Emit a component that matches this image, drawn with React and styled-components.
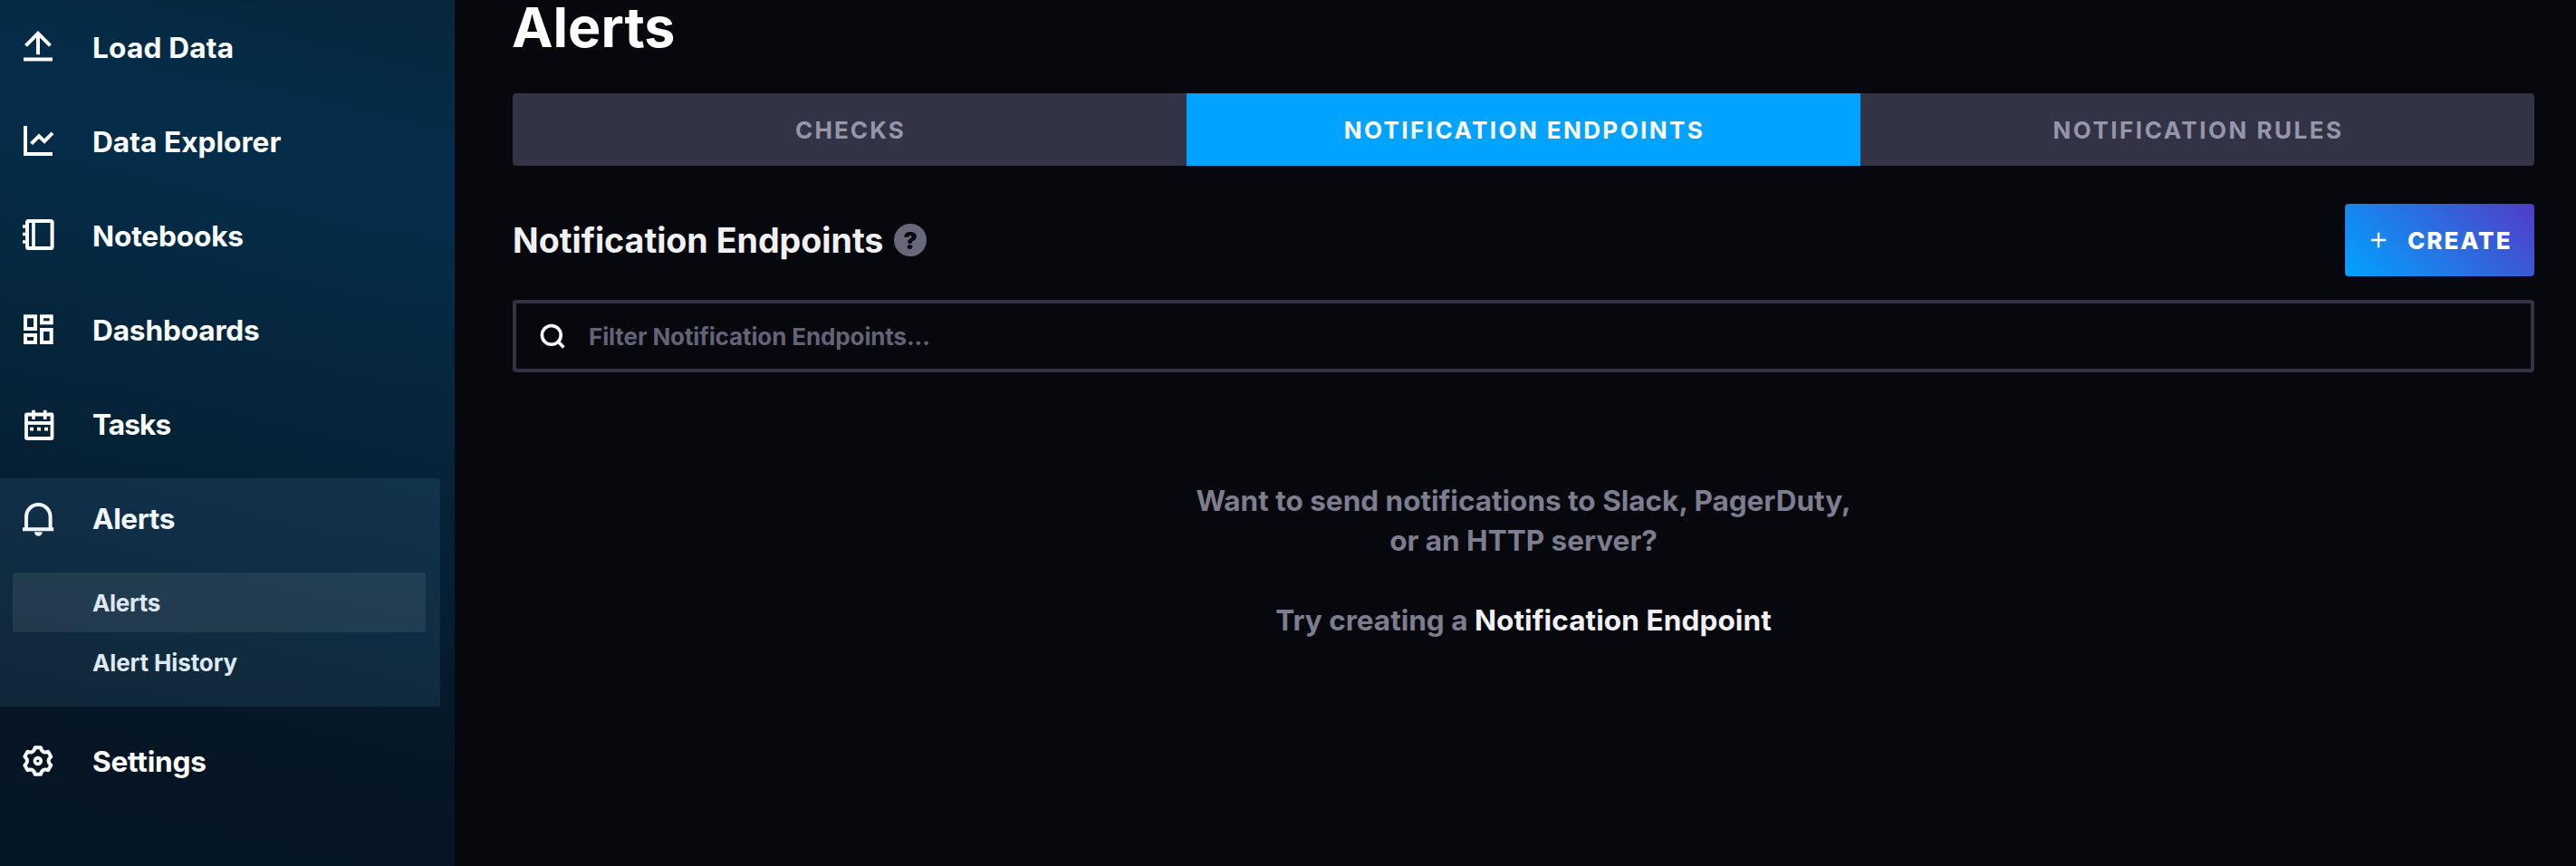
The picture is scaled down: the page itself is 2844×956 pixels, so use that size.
import React from 'react';
import styled, { createGlobalStyle } from 'styled-components';

const GlobalStyle = createGlobalStyle`
  * { box-sizing: border-box; }
  body {
    margin: 0;
    background: #07070e;
    font-family: Inter, "Liberation Sans", sans-serif;
    overflow: hidden;
  }
`;

const Shell = styled.div`
  display: flex;
  width: 100%;
  height: 956px;
  background: #07070e;
`;

/* ---------- sidebar ---------- */

const Sidebar = styled.nav`
  flex: none;
  display: flex;
  flex-direction: column;
  gap: 16px;
  width: 502px;
  padding: 8px 16px 0 0;
  background: linear-gradient(
    192.4deg,
    #07263a 0%,
    #052a45 10%,
    #042d4a 19%,
    #052a45 30%,
    #06253b 44%,
    #052034 58%,
    #051827 76%,
    #051524 86%,
    #041626 100%
  );
`;

const NavGroup = styled.div`
  border-radius: 0 4px 4px 0;
  background: ${(p) => (p.$active ? 'rgba(110, 180, 240, 0.11)' : 'transparent')};
`;

const NavItem = styled.a`
  display: flex;
  align-items: center;
  gap: 40px;
  height: 88px;
  padding-left: 22px;
  color: ${(p) => (p.$active ? '#f1f8ff' : '#ffffff')};
`;

const NavIcon = styled.svg`
  flex: none;
  width: 40px;
  height: 40px;
  fill: none;
  stroke: currentColor;
  stroke-width: 4;
`;

const NavLabel = styled.span`
  padding-top: 1px;
  font-size: 31.6px;
  font-weight: 700;
  white-space: nowrap;
  letter-spacing: ${(p) => p.$track}px;
`;

const SubMenu = styled.div`
  padding: 16px 16px 16px 14px;
`;

const SubItem = styled.a`
  display: flex;
  align-items: center;
  height: 66px;
  padding: 1px 0 0 88px;
  border-radius: 4px;
  background: ${(p) => (p.$active ? 'rgba(255, 255, 255, 0.08)' : 'transparent')};
  color: #dfe9f4;
  font-size: 26px;
  font-weight: 700;
  letter-spacing: ${(p) => p.$track}px;
`;

/* ---------- page ---------- */

const Page = styled.main`
  flex: 1;
  display: flex;
  flex-direction: column;
  padding: 0 46px 0 64px;
`;

const Title = styled.h1`
  margin: 0 0 43px -1px;
  height: 60px;
  line-height: 60px;
  font-size: 61px;
  font-weight: 700;
  letter-spacing: 0;
  color: #ffffff;
`;

const Tabs = styled.div`
  display: grid;
  grid-template-columns: repeat(3, 1fr);
  height: 80px;
  border-radius: 4px;
  overflow: hidden;
  background: #333346;
`;

const Tab = styled.div`
  display: flex;
  align-items: center;
  justify-content: center;
  padding-left: 2px;
  font-size: 26px;
  font-weight: 700;
  letter-spacing: ${(p) => p.$track}px;
  color: ${(p) => (p.$active ? '#ffffff' : '#9696ab')};
  background: ${(p) => (p.$active ? '#00a3ff' : 'transparent')};
`;

const Header = styled.div`
  display: flex;
  align-items: center;
  height: 80px;
  margin: 42px 0 26px;
`;

const Heading = styled.h2`
  margin: 0;
  width: 421px;
  font-size: 37.6px;
  font-weight: 700;
  letter-spacing: 0;
  white-space: nowrap;
  color: #f1f1f3;
`;

const HelpBadge = styled.span`
  display: flex;
  align-items: center;
  justify-content: center;
  width: 36px;
  height: 36px;
  border-radius: 50%;
  background: #68687b;
  color: #07070e;
  font-size: 26px;
  font-weight: 900;
`;

const CreateButton = styled.button`
  display: flex;
  align-items: center;
  width: 209px;
  height: 80px;
  margin: 0 0 0 auto;
  padding: 0 0 0 28px;
  border: 0;
  border-radius: 4px;
  background: linear-gradient(45deg, #00a3ff 0%, #513cc6 100%);
  color: #ffffff;
  font-family: inherit;
  font-size: 26px;
  font-weight: 800;
  letter-spacing: 2px;
`;

const PlusIcon = styled.svg`
  flex: none;
  width: 18px;
  height: 18px;
  margin-right: 23px;
  fill: none;
  stroke: currentColor;
  stroke-width: 2.4;
`;

const SearchBox = styled.div`
  display: flex;
  align-items: center;
  gap: 26px;
  height: 80px;
  padding-left: 26px;
  border: 4px solid #333346;
  border-radius: 4px;
`;

const SearchIcon = styled.svg`
  flex: none;
  width: 28px;
  height: 28px;
  fill: none;
  stroke: #ffffff;
  stroke-width: 3.6;
`;

const Placeholder = styled.span`
  padding-top: 1px;
  font-size: 26px;
  font-weight: 700;
  letter-spacing: -0.12px;
  color: #636376;
`;

const EmptyState = styled.div`
  padding-top: 120px;
  text-align: center;
  font-size: 31.5px;
  font-weight: 700;
  line-height: 44px;
  letter-spacing: 0;
  color: #7d7d8f;
`;

const EmptyText = styled.p`
  margin: 0 0 44px;
`;

const Strong = styled.b`
  font-weight: 700;
  letter-spacing: 0.1px;
  color: #f1f1f3;
`;

/* Outline of a six-lobed gear centred in the 40px icon box. */
const gearPath = (() => {
  const at = (deg, r) => {
    const a = (deg * Math.PI) / 180;
    return `${(19.8 + r * Math.cos(a)).toFixed(2)} ${(20 + r * Math.sin(a)).toFixed(2)}`;
  };
  let d = `M${at(18, 15.2)}`;
  for (let k = 0; k < 6; k += 1) {
    const lobe = 30 + k * 60;
    d += `L${at(lobe + 12, 15.2)}Q${at(lobe + 30, 9)} ${at(lobe + 48, 15.2)}`;
  }
  return `${d}Z`;
})();

const icons = {
  upload: (
    <>
      <path d="M6.5 18.3L20 4.8L33.5 18.3M20 5V28.3" />
      <path d="M4 33.5H36" />
    </>
  ),
  chart: (
    <>
      <path d="M6 3V34H36" />
      <path d="M12.6 22.6L21 14.3L27 20L36 10.8" />
    </>
  ),
  notebook: (
    <>
      <rect x="8" y="4" width="27.6" height="30" rx="1.5" />
      <path d="M15 4V34" strokeWidth="3.6" />
      <path d="M3 10H8M3 18.5H8M3 27H8" strokeWidth="3.4" />
    </>
  ),
  dashboards: (
    <>
      <rect x="6" y="5.3" width="11" height="13.7" />
      <rect x="24" y="5.3" width="10.7" height="7" />
      <rect x="6" y="26" width="11" height="8" />
      <rect x="24" y="20" width="10.7" height="14" />
    </>
  ),
  calendar: (
    <>
      <rect x="7" y="9.5" width="28.5" height="26.5" rx="0.5" strokeWidth="3.8" />
      <path d="M7 19H35.5" strokeWidth="3.8" />
      <path d="M15 4.7V15M27.7 4.7V15" strokeWidth="3.6" />
      <path d="M11 25.6H15M19 25.6H23M27 25.6H31" strokeWidth="3.6" />
    </>
  ),
  bell: (
    <>
      <path d="M7 32V18.6a13.3 13.6 0 0 1 26.6 0V32" />
      <path d="M3 32.2H37.2" />
      <path d="M16 35.3h8.7a4.35 4.4 0 0 1-8.7 0z" fill="currentColor" stroke="none" />
    </>
  ),
  gear: (
    <>
      <path d={gearPath} strokeLinejoin="round" />
      <circle cx="19.8" cy="20" r="3.4" strokeWidth="3.6" />
    </>
  ),
};

const navigation = [
  { label: 'Load Data', icon: 'upload', track: 0.2 },
  { label: 'Data Explorer', icon: 'chart', track: 0.04 },
  { label: 'Notebooks', icon: 'notebook', track: -0.15 },
  { label: 'Dashboards', icon: 'dashboards', track: -0.15 },
  { label: 'Tasks', icon: 'calendar', track: -0.9 },
  {
    label: 'Alerts',
    icon: 'bell',
    track: -0.4,
    active: true,
    children: [
      { label: 'Alerts', track: -0.3, active: true },
      { label: 'Alert History', track: -0.12 },
    ],
  },
  { label: 'Settings', icon: 'gear', track: -0.2 },
];

const tabs = [
  { label: 'CHECKS', track: 2.1 },
  { label: 'NOTIFICATION ENDPOINTS', track: 2.42, active: true },
  { label: 'NOTIFICATION RULES', track: 2.5 },
];

export default function App() {
  return (
    <>
      <GlobalStyle />
      <Shell>
        <Sidebar>
          {navigation.map((item) => (
            <NavGroup key={item.label} $active={item.active}>
              <NavItem $active={item.active}>
                <NavIcon viewBox="0 0 40 40">{icons[item.icon]}</NavIcon>
                <NavLabel $track={item.track}>{item.label}</NavLabel>
              </NavItem>
              {item.children && (
                <SubMenu>
                  {item.children.map((child) => (
                    <SubItem key={child.label} $active={child.active} $track={child.track}>
                      {child.label}
                    </SubItem>
                  ))}
                </SubMenu>
              )}
            </NavGroup>
          ))}
        </Sidebar>
        <Page>
          <Title>Alerts</Title>
          <Tabs>
            {tabs.map((tab) => (
              <Tab key={tab.label} $active={tab.active} $track={tab.track}>
                {tab.label}
              </Tab>
            ))}
          </Tabs>
          <Header>
            <Heading>Notification Endpoints</Heading>
            <HelpBadge>?</HelpBadge>
            <CreateButton>
              <PlusIcon viewBox="0 0 18 18">
                <path d="M9 0.8V17.2M0.8 9H17.2" />
              </PlusIcon>
              CREATE
            </CreateButton>
          </Header>
          <SearchBox>
            <SearchIcon viewBox="0 0 28 28">
              <circle cx="12.8" cy="12.9" r="10.4" />
              <path d="M19.8 19.8L26.4 26.4" />
            </SearchIcon>
            <Placeholder>Filter Notification Endpoints...</Placeholder>
          </SearchBox>
          <EmptyState>
            <EmptyText>
              Want to send notifications to Slack, PagerDuty,
              <br />
              or an HTTP server?
            </EmptyText>
            <EmptyText>
              Try creating a <Strong>Notification Endpoint</Strong>
            </EmptyText>
          </EmptyState>
        </Page>
      </Shell>
    </>
  );
}
